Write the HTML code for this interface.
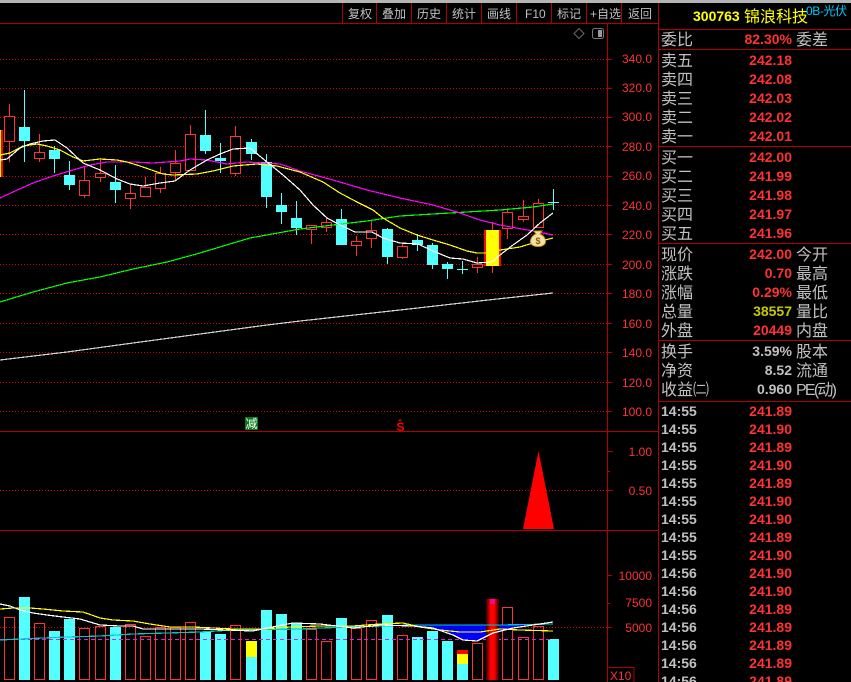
<!DOCTYPE html>
<html><head><meta charset="utf-8"><style>
html,body{margin:0;padding:0;background:#000;width:851px;height:682px;overflow:hidden}
svg{display:block}
text{font-family:"Liberation Sans","Noto Sans CJK SC",sans-serif}
.t{font-size:12px;fill:#c0c0c0}
.a{font-size:12px;fill:#ff3232;text-anchor:end}
.l{font-size:16px;fill:#c0c0c0}
.n{font-size:14px;font-weight:bold;fill:#ff3232;text-anchor:end}
.g{fill:#c0c0c0}
.m{font-size:14px;font-weight:bold;fill:#c0c0c0}
.ln{fill:none;stroke-width:1.2;shape-rendering:crispEdges}
</style></head><body>
<svg width="851" height="682" viewBox="0 0 851 682" xmlns="http://www.w3.org/2000/svg">
<rect width="851" height="682" fill="#000"/>
<rect width="851" height="3" fill="#b4b4b4"/>
<g shape-rendering="crispEdges">
<path d="M0 59.5H607M0 88.5H607M0 117.5H607M0 146.5H607M0 176.5H607M0 205.5H607M0 234.5H607M0 264.5H607M0 293.5H607M0 323.5H607M0 352.5H607M0 382.5H607M0 411.5H607M0 490.5H607M0 627.5H607" stroke="#e00000" stroke-dasharray="1 2" fill="none"/>
<path d="M0 23.5H658M0 431.5H658M0 530.5H658M658.5 3V682M607.5 23V682M342.5 3V23M376.5 3V23M411.5 3V23M446.5 3V23M481.5 3V23M516.5 3V23M551.5 3V23M586.5 3V23M621.5 3V23" stroke="#b00000" fill="none"/>
<path d="M659 29.5H851M659 49.5H851M659 146.5H851M659 243.5H851M659 340.5H851M659 401.5H851" stroke="#b00000" fill="none"/>
<path d="M607 59.5H612M607 88.5H612M607 117.5H612M607 146.5H612M607 176.5H612M607 205.5H612M607 234.5H612M607 264.5H612M607 293.5H612M607 323.5H612M607 352.5H612M607 382.5H612M607 411.5H612M607 451.5H613M607 471.5H610M607 490.5H613M607 575.5H612M607 603.5H610M607 627.5H612" stroke="#b00000" fill="none"/>
<path d="M608.5 667.5H634V682" stroke="#b00000" fill="none"/>
<rect x="0" y="130" width="1" height="47" fill="#ffff00"/><rect x="1" y="130" width="2" height="47" fill="#ff0000"/>
<!-- wicks -->
<path d="M9.5 104V162M39.5 134V162M84.5 167V198M100.5 158V182M130.5 184V209M145.5 177V197M160.5 167V193M175.5 150V180M190.5 125V170M235.5 126V176M311.5 225V244M326.5 218V232M356.5 236V256M371.5 221V248M402.5 243V259M477.5 257V273M492.5 222V273M507.5 209V239M523.5 200V222M538.5 199V227" stroke="#ff3232" fill="none"/>
<path d="M24.5 90V162M54.5 146V173M69.5 161V190M115.5 165V203M205.5 110V154M220.5 143V173M251.5 139V160M266.5 154V208M281.5 193V224M296.5 201V235M341.5 209V245M387.5 228V264M417.5 234V251M432.5 243V269M447.5 262V279M462.5 261V274M457 269.5H468M553.5 189V210M548 202.5H559" stroke="#54ffff" fill="none"/>
<!-- red bodies -->
<g fill="#000" stroke="#ff3232">
<rect x="4.5" y="116.5" width="10" height="25"/>
<rect x="34.5" y="152.5" width="10" height="6"/>
<rect x="79.5" y="180.5" width="10" height="15"/>
<rect x="95.5" y="173.5" width="10" height="4"/>
<rect x="125.5" y="193.5" width="10" height="5"/>
<rect x="140.5" y="187.5" width="10" height="9"/>
<rect x="155.5" y="173.5" width="10" height="15"/>
<rect x="170.5" y="163.5" width="10" height="9"/>
<rect x="185.5" y="134.5" width="10" height="36"/>
<rect x="230.5" y="136.5" width="10" height="37"/>
<rect x="306.5" y="225.5" width="10" height="4"/>
<rect x="321.5" y="222.5" width="10" height="5"/>
<rect x="351.5" y="241.5" width="10" height="4"/>
<rect x="366.5" y="230.5" width="10" height="8"/>
<rect x="397.5" y="246.5" width="10" height="11"/>
<rect x="472.5" y="264.5" width="10" height="3"/>
<rect x="502.5" y="212.5" width="10" height="16"/>
<rect x="518.5" y="216.5" width="10" height="3"/>
<rect x="533.5" y="203.5" width="10" height="24"/>
</g>
<rect x="484" y="230" width="17" height="36" fill="#ff0000"/><rect x="486" y="230" width="13" height="36" fill="#ffff00"/>
<!-- cyan bodies -->
<g fill="#54ffff">
<rect x="19" y="127" width="11" height="14"/>
<rect x="49" y="150" width="11" height="9"/>
<rect x="64" y="175" width="11" height="10"/>
<rect x="110" y="182" width="11" height="8"/>
<rect x="200" y="135" width="11" height="16"/>
<rect x="215" y="158" width="11" height="3"/>
<rect x="246" y="142" width="11" height="12"/>
<rect x="261" y="162" width="11" height="35"/>
<rect x="276" y="205" width="11" height="7"/>
<rect x="291" y="218" width="11" height="10"/>
<rect x="336" y="219" width="11" height="26"/>
<rect x="382" y="229" width="11" height="28"/>
<rect x="412" y="240" width="11" height="5"/>
<rect x="427" y="245" width="11" height="20"/>
<rect x="442" y="264" width="11" height="5"/>
</g>
</g>
<!-- MA lines -->
<polyline class="ln" stroke="#d0d0d0" points="0,360 67,352 133,343 200,334 267,325 300,321 400,310 497,299 553,293"/>
<polyline class="ln" stroke="#00ff00" points="0,302 33,292 67,283 100,277 133,269 167,262 200,253 250,238 300,229 333,225 367,221 400,216 433,214 467,212 500,210 533,207 553,204"/>
<polyline class="ln" stroke="#ff00ff" points="0,198 13,192 33,183 53,176 73,170 90,165 107,162 133,162 153,163 180,161 190,159 207,160 227,164 247,162 263,163 280,164 300,171 333,180 367,190 400,198 433,205 457,212 480,220 500,225 533,231 553,235"/>
<polyline class="ln" stroke="#ffff00" points="0,155 10,153 23,146 37,144 47,146 60,150 73,157 83,161 100,159 117,160 127,162 140,166 163,174 173,175 197,174 213,171 233,166 257,164 277,166 300,172 323,182 340,193 357,202 373,210 383,218 400,228 417,235 433,240 450,245 467,251 477,253 485,253 500,250 520,247 533,243 553,238"/>
<polyline class="ln" stroke="#fff" points="0,160 7,159 20,148 30,144 43,141 55,140 67,148 83,163 100,170 117,179 130,184 143,186 160,183 175,181 190,170 207,160 220,154 233,149 250,148 267,162 283,175 300,190 313,205 327,218 340,225 355,232 372,232 383,238 400,243 418,244 433,251 450,258 463,259 477,263 492,262 500,255 513,245 527,235 540,223 553,213"/>
<!-- money bag -->
<g>
<path d="M534 231h8l-2 3c3.500 1.500 5.500 4.500 5.500 7.500 0 3-3 5-7.500 5s-7.500-2-7.500-5c0-3 2-6 5.500-7.500z" fill="#f4e2a0" stroke="#c89a20" stroke-width="1"/>
<text x="538" y="244" font-size="9" font-weight="bold" fill="#8a5a10" text-anchor="middle">$</text>
</g>
<!-- markers -->
<rect x="245" y="417" width="13" height="13" fill="#0a7a1a"/>
<text x="251.500" y="428" font-size="12" fill="#fff" text-anchor="middle">减</text>
<path d="M400 419l2 2h-4z" fill="#ff0000"/>
<text x="400.500" y="431" font-size="12" font-weight="bold" fill="#ff0000" text-anchor="middle">S</text>
<!-- mid pane triangle -->
<polygon points="538.500,451 554,529 523,529" fill="#ff0000"/>
<!-- volume bars -->
<g shape-rendering="crispEdges">
<g fill="#54ffff">
<rect x="19" y="597" width="11" height="83"/>
<rect x="49" y="631" width="11" height="49"/>
<rect x="64" y="619" width="11" height="61"/>
<rect x="110" y="627" width="11" height="53"/>
<rect x="200" y="632" width="11" height="48"/>
<rect x="215" y="634" width="11" height="46"/>
<rect x="246" y="641" width="11" height="39"/>
<rect x="261" y="610" width="11" height="70"/>
<rect x="276" y="614" width="11" height="66"/>
<rect x="291" y="623" width="11" height="57"/>
<rect x="336" y="618" width="11" height="62"/>
<rect x="382" y="615" width="11" height="65"/>
<rect x="412" y="637" width="11" height="43"/>
<rect x="427" y="631" width="11" height="49"/>
<rect x="442" y="641" width="11" height="39"/>
<rect x="457" y="650" width="11" height="30"/>
<rect x="548" y="639" width="11" height="41"/>
</g>
<rect x="246" y="641" width="11" height="16" fill="#ffff00"/>
<rect x="457" y="650" width="11" height="4" fill="#ff0000"/>
<rect x="457" y="654" width="11" height="10" fill="#ffff00"/>
<g fill="none" stroke="#ff3232">
<rect x="4.500" y="617.500" width="10" height="62"/>
<rect x="34.500" y="623.500" width="10" height="56"/>
<rect x="79.500" y="628.500" width="10" height="51"/>
<rect x="95.500" y="626.500" width="10" height="53"/>
<rect x="125.500" y="624.500" width="10" height="55"/>
<rect x="140.500" y="636.500" width="10" height="43"/>
<rect x="155.500" y="627.500" width="10" height="52"/>
<rect x="170.500" y="627.500" width="10" height="52"/>
<rect x="185.500" y="622.500" width="10" height="57"/>
<rect x="230.500" y="625.500" width="10" height="54"/>
<rect x="306.500" y="629.500" width="10" height="50"/>
<rect x="321.500" y="641.500" width="10" height="38"/>
<rect x="351.500" y="628.500" width="10" height="51"/>
<rect x="366.500" y="620.500" width="10" height="59"/>
<rect x="397.500" y="635.500" width="10" height="44"/>
<rect x="472.500" y="643.500" width="10" height="36"/>
<rect x="502.500" y="607.500" width="10" height="72"/>
<rect x="518.500" y="637.500" width="10" height="42"/>
<rect x="533.500" y="626.500" width="10" height="53"/>
</g>
<path d="M0 639.500H553" stroke="#e020e0" stroke-dasharray="4 3" fill="none"/>
</g>
<polygon points="413,625 433,628 453,635 463,640 477,641 493,633 513,628 533,625 500,625" fill="#0000ff"/>
<defs><linearGradient id="gl" x1="0" x2="1" y1="0" y2="0"><stop offset="0" stop-color="#300000"/><stop offset=".35" stop-color="#ff0000"/><stop offset=".65" stop-color="#ff0000"/><stop offset="1" stop-color="#300000"/></linearGradient></defs>
<rect x="486" y="599" width="13" height="81" fill="url(#gl)" shape-rendering="crispEdges"/>
<rect x="490" y="599" width="5" height="5" fill="#ff0090" shape-rendering="crispEdges"/>
<polyline class="ln" stroke="#00c8c8" points="0,640 20,639 67,637 100,636 133,634 167,633 200,632 233,630 300,629 320,628 353,627 413,625 500,625 553,624"/>
<polyline class="ln" stroke="#ffff00" points="0,609 13,608 30,608 43,609 63,611 83,612 100,618 113,620 133,621 150,624 170,627 193,627 213,628 233,629 263,629 290,627 320,626 353,626 380,624 403,623 420,627 440,630 460,632 480,632 500,629 520,630 553,631"/>
<polyline class="ln" stroke="#fff" points="0,604 10,606 20,610 33,613 47,615 63,617 80,619 100,625 120,626 133,626 143,629 200,629 227,630 253,631 267,628 293,623 320,624 353,628 380,625 413,626 433,628 453,635 463,640 477,641 493,633 513,628 533,625 553,622"/>
<!-- toolbar -->
<text class="t" x="348" y="18">复权</text>
<text class="t" x="382" y="18">叠加</text>
<text class="t" x="417" y="18">历史</text>
<text class="t" x="452" y="18">统计</text>
<text class="t" x="487" y="18">画线</text>
<text class="t" x="525" y="18">F10</text>
<text class="t" x="557" y="18">标记</text>
<text class="t" x="590" y="18">+自选</text>
<text class="t" x="628" y="18">返回</text>
<path d="M579 28.500l5 5-5 5-5-5z" fill="none" stroke="#6a6a6a"/>
<rect x="592.500" y="28.500" width="11" height="10" rx="2" fill="#000" stroke="#777"/>
<rect x="598" y="30" width="4" height="7" fill="#999"/>
<!-- axis -->
<text class="a" x="652" y="63">340.0</text>
<text class="a" x="652" y="92">320.0</text>
<text class="a" x="652" y="121">300.0</text>
<text class="a" x="652" y="151">280.0</text>
<text class="a" x="652" y="180">260.0</text>
<text class="a" x="652" y="210">240.0</text>
<text class="a" x="652" y="239">220.0</text>
<text class="a" x="652" y="269">200.0</text>
<text class="a" x="652" y="298">180.0</text>
<text class="a" x="652" y="328">160.0</text>
<text class="a" x="652" y="357">140.0</text>
<text class="a" x="652" y="387">120.0</text>
<text class="a" x="652" y="416">100.0</text>
<text class="a" x="652" y="456">1.00</text>
<text class="a" x="652" y="495">0.50</text>
<text class="a" x="652" y="580">10000</text>
<text class="a" x="652" y="607">7500</text>
<text class="a" x="652" y="632">5000</text>
<text x="610" y="680" font-size="12" fill="#ff3232">X10</text>
<!-- right header -->
<text x="693" y="21" font-size="14" font-weight="bold" fill="#ffff00">300763</text>
<text x="744" y="22" font-size="16" fill="#ffff00">锦浪科技</text>
<text x="806" y="15" font-size="12" fill="#00c8ff" textLength="41">0B-光伏</text>
<!-- labels -->
<g class="l">
<text class="l" x="661" y="45">委比</text><text class="l" x="796" y="45">委差</text>
<text class="l" x="661" y="66">卖五</text><text class="l" x="661" y="85">卖四</text><text class="l" x="661" y="104">卖三</text><text class="l" x="661" y="123">卖二</text><text class="l" x="661" y="142">卖一</text>
<text class="l" x="661" y="163">买一</text><text class="l" x="661" y="182">买二</text><text class="l" x="661" y="201">买三</text><text class="l" x="661" y="220">买四</text><text class="l" x="661" y="239">买五</text>
<text class="l" x="661" y="260">现价</text><text class="l" x="796" y="260">今开</text>
<text class="l" x="661" y="279">涨跌</text><text class="l" x="796" y="279">最高</text>
<text class="l" x="661" y="298">涨幅</text><text class="l" x="796" y="298">最低</text>
<text class="l" x="661" y="317">总量</text><text class="l" x="796" y="317">量比</text>
<text class="l" x="661" y="336">外盘</text><text class="l" x="796" y="336">内盘</text>
<text class="l" x="661" y="357">换手</text><text class="l" x="796" y="357">股本</text>
<text class="l" x="661" y="376">净资</text><text class="l" x="796" y="376">流通</text>
<text class="l" x="661" y="395">收益㈡</text><text class="l" x="796" y="395" textLength="41">PE(动)</text>
</g>
<g>
<text class="n" x="792" y="44">82.30%</text>
<text class="n" x="792" y="65">242.18</text><text class="n" x="792" y="84">242.08</text><text class="n" x="792" y="103">242.03</text><text class="n" x="792" y="122">242.02</text><text class="n" x="792" y="141">242.01</text>
<text class="n" x="792" y="162">242.00</text><text class="n" x="792" y="181">241.99</text><text class="n" x="792" y="200">241.98</text><text class="n" x="792" y="219">241.97</text><text class="n" x="792" y="238">241.96</text>
<text class="n" x="792" y="259">242.00</text><text class="n" x="792" y="278">0.70</text><text class="n" x="792" y="297">0.29%</text>
<text class="n" x="792" y="316" style="fill:#c8c800">38557</text><text class="n" x="792" y="335">20449</text>
<text class="n" x="792" y="356" style="fill:#c0c0c0">3.59%</text><text class="n" x="792" y="375" style="fill:#c0c0c0">8.52</text><text class="n" x="792" y="394" style="fill:#c0c0c0">0.960</text>
</g>
<g>
<text class="m" x="661" y="416">14:55</text><text class="n" x="792" y="416">241.89</text>
<text class="m" x="661" y="434">14:55</text><text class="n" x="792" y="434">241.90</text>
<text class="m" x="661" y="452">14:55</text><text class="n" x="792" y="452">241.89</text>
<text class="m" x="661" y="470">14:55</text><text class="n" x="792" y="470">241.90</text>
<text class="m" x="661" y="488">14:55</text><text class="n" x="792" y="488">241.89</text>
<text class="m" x="661" y="506">14:55</text><text class="n" x="792" y="506">241.90</text>
<text class="m" x="661" y="524">14:55</text><text class="n" x="792" y="524">241.90</text>
<text class="m" x="661" y="542">14:55</text><text class="n" x="792" y="542">241.89</text>
<text class="m" x="661" y="560">14:55</text><text class="n" x="792" y="560">241.90</text>
<text class="m" x="661" y="578">14:56</text><text class="n" x="792" y="578">241.90</text>
<text class="m" x="661" y="596">14:56</text><text class="n" x="792" y="596">241.90</text>
<text class="m" x="661" y="614">14:56</text><text class="n" x="792" y="614">241.89</text>
<text class="m" x="661" y="632">14:56</text><text class="n" x="792" y="632">241.89</text>
<text class="m" x="661" y="650">14:56</text><text class="n" x="792" y="650">241.89</text>
<text class="m" x="661" y="668">14:56</text><text class="n" x="792" y="668">241.89</text>
<text class="m" x="661" y="686">14:56</text><text class="n" x="792" y="686">241.89</text>
</g>
</svg>
</body></html>
